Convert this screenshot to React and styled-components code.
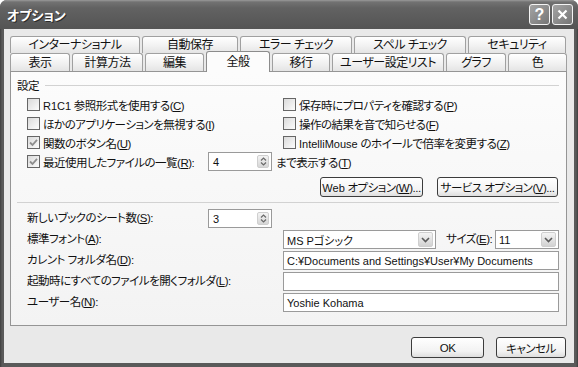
import React from 'react';
import styled, { createGlobalStyle } from 'styled-components';

const GlobalStyle = createGlobalStyle`
  html, body {
    margin: 0;
    padding: 0;
    background: #ffffff;
  }
  body {
    font-family: "Liberation Sans", "Noto Sans CJK JP", sans-serif;
    font-size: 12px;
  }
`;

const Window = styled.div`
  width: 578px;
  height: 367px;
  box-sizing: border-box;
  display: flex;
  flex-direction: column;
  background: linear-gradient(to right, #3e3e3e 0, #5a5a5a 2px, #5a5a5a calc(100% - 2px), #3e3e3e 100%);
  border-radius: 7px 7px 0 0;
  overflow: hidden;
  font-family: "Liberation Sans", "Noto Sans CJK JP", sans-serif;
  font-feature-settings: "palt";
  font-size: 11.5px;
  letter-spacing: -0.5px;
  color: #111;
`;

const TitleBar = styled.div`
  height: 29px;
  flex: none;
  display: flex;
  align-items: center;
  padding: 0 5px 0 7px;
  background: linear-gradient(to bottom, #9a9a9a 0, #727272 2px, #626262 8px, #5a5a5a 20px, #545454 100%);
`;

const Title = styled.div`
  flex: 1;
  color: #fff;
  font-weight: bold;
  font-size: 13px;
  letter-spacing: 0;
  text-shadow: 1px 1px 0 #2a2a2a;
`;

const CaptionButtons = styled.div`
  display: flex;
  gap: 2px;
`;

const CaptionButton = styled.div`
  width: 21px;
  height: 21px;
  box-sizing: border-box;
  border: 1px solid #f4f4f4;
  border-radius: 3px;
  background: linear-gradient(135deg, #a4a4a4, #767676);
  display: flex;
  align-items: center;
  justify-content: center;
  color: #fff;
  font-family: "Liberation Sans", sans-serif;
  font-weight: bold;
  font-size: 16px;
  letter-spacing: 0;
`;

const Client = styled.div`
  flex: 1;
  margin: 0 4px 4px;
  background: #e9e9e9;
  padding: 7px 7px 0 6px;
  display: flex;
  flex-direction: column;
`;

const TabRow = styled.div`
  display: flex;
  align-items: flex-end;
  gap: 2px;
  height: ${p => p.h}px;
`;

const Tab = styled.div`
  position: relative;
  z-index: ${p => (p.active ? 2 : 0)};
  width: ${p => p.w}px;
  height: ${p => (p.active ? '21px' : '100%')};
  margin-bottom: ${p => (p.active ? -1 : 0)}px;
  box-sizing: border-box;
  border: 1px solid ${p => (p.active ? '#8c8c8c' : '#a0a0a0')};
  border-bottom: none;
  border-radius: 3px 3px 0 0;
  background: ${p => (p.active ? '#fcfcfc' : 'linear-gradient(to bottom, #ffffff, #f0f0f0 60%, #e4e4e4)')};
  display: flex;
  align-items: center;
  justify-content: center;
  white-space: nowrap;
  line-height: 14px;
  font-size: 12px;
`;

const Panel = styled.div`
  height: 255px;
  box-sizing: border-box;
  border: 1px solid #959595;
  background: linear-gradient(to bottom, #fcfcfc, #f3f3f3);
  padding: 6px 6px 0 6px;
  display: flex;
  flex-direction: column;
`;

const GroupHeader = styled.div`
  height: 14px;
  display: flex;
  align-items: center;
  gap: 6px;
  padding-right: 1px;
`;

const Rule = styled.div`
  flex: 1;
  height: 1px;
  background: #d2d2d2;
`;

const CheckSection = styled.div`
  margin-top: 3px;
  padding-left: 10px;
  display: grid;
  grid-template-columns: 256px 1fr;
  grid-auto-rows: 19px;
`;

const CheckItem = styled.div`
  display: flex;
  align-items: center;
  gap: 3px;
  white-space: nowrap;
  grid-column: ${p => (p.span ? '1 / 3' : 'auto')};
`;

const Box = styled.span`
  width: 13px;
  height: 13px;
  box-sizing: border-box;
  flex: none;
  border: 1px solid #666;
  background: linear-gradient(135deg, #dadada, #fcfcfc);
  display: flex;
  align-items: center;
  justify-content: center;
`;

const Latin = styled.span`
  letter-spacing: 0;
  font-size: 11px;
`;

const InlineLabel = styled.span`
  width: ${p => p.w}px;
  flex: none;
`;

const TrailText = styled.span`
  margin-left: 1px;
`;

const SpinBox = styled.div`
  width: 64px;
  height: 19px;
  flex: none;
  box-sizing: border-box;
  border: 1px solid #9a9a9a;
  background: #fff;
  display: flex;
  align-items: center;
  padding: 0 2px 0 4px;
  letter-spacing: 0;
  font-size: 11px;
`;

const SpinValue = styled.span`
  flex: 1;
`;

const SpinButton = styled.div`
  width: 12px;
  height: 13px;
  box-sizing: border-box;
  border: 1px solid #cfcfcf;
  border-radius: 2px;
  background: linear-gradient(to bottom, #f4f4f4, #d6d6d6);
  display: flex;
  align-items: center;
  justify-content: center;
`;

const ButtonRow = styled.div`
  margin-top: 6px;
  height: 20px;
  display: flex;
  justify-content: flex-end;
  gap: 14px;
  padding-right: 2px;
`;

const PushButton = styled.div`
  width: ${p => p.w}px;
  height: ${p => p.h || 20}px;
  box-sizing: border-box;
  border: 1px solid #3c3c3c;
  border-radius: 3px;
  background: linear-gradient(to bottom, #ffffff, #f2f2f2 70%, #dedede);
  display: flex;
  align-items: center;
  justify-content: center;
  white-space: nowrap;
`;

const Divider = styled.div`
  margin-top: 5px;
  height: 1px;
  background: #d2d2d2;
  margin-right: 1px;
`;

const FieldGrid = styled.div`
  margin-top: 5px;
  padding-left: 10px;
  display: grid;
  grid-template-columns: 181px 75px 276px;
  grid-auto-rows: 21px;
  align-items: center;
`;

const FieldLabel = styled.div`
  white-space: nowrap;
  grid-column: ${p => (p.span ? '1 / 3' : 'auto')};
  margin-top: -3px;
`;

const FontRow = styled.div`
  display: flex;
  align-items: center;
  white-space: nowrap;
`;

const TextBox = styled.div`
  width: ${p => (p.w ? `${p.w}px` : '100%')};
  height: 19px;
  flex: none;
  box-sizing: border-box;
  border: 1px solid #9a9a9a;
  background: #fff;
  display: flex;
  align-items: center;
  padding: 0 2px 0 3px;
  white-space: nowrap;
  overflow: hidden;
  letter-spacing: 0;
  font-size: 11px;
`;

const ComboText = styled.span`
  flex: 1;
`;

const ComboButton = styled.div`
  width: 15px;
  height: 15px;
  box-sizing: border-box;
  border: 1px solid #cfcfcf;
  border-radius: 2px;
  background: linear-gradient(to bottom, #f4f4f4, #d2d2d2);
  display: flex;
  align-items: center;
  justify-content: center;
`;

const SizeLabel = styled.span`
  flex: 1;
  margin: -3px 0 0 10px;
`;

const Footer = styled.div`
  margin-top: 11px;
  display: flex;
  justify-content: flex-end;
  gap: 12px;
  padding-right: 1px;
`;

const Check = () => (
  <svg width="9" height="9" viewBox="0 0 9 9">
    <path d="M1 4.5 L3.5 7 L8 1.8" fill="none" stroke="#8e8e8e" strokeWidth="1.8" />
  </svg>
);

const CheckBox = ({ checked, children, span }) => (
  <CheckItem span={span}>
    <Box>{checked && <Check />}</Box>
    <span>{children}</span>
  </CheckItem>
);

const Spin = ({ value }) => (
  <SpinBox>
    <SpinValue>{value}</SpinValue>
    <SpinButton>
      <svg width="7" height="9" viewBox="0 0 7 9">
        <path d="M1 3.5 L3.5 1 L6 3.5 M1 5.5 L3.5 8 L6 5.5" fill="none" stroke="#6a6a6a" strokeWidth="1.2" />
      </svg>
    </SpinButton>
  </SpinBox>
);

const ComboArrow = () => (
  <ComboButton>
    <svg width="9" height="6" viewBox="0 0 9 6">
      <path d="M1 1 L4.5 4.5 L8 1" fill="none" stroke="#5a5a5a" strokeWidth="1.6" />
    </svg>
  </ComboButton>
);

const topTabs = [
  ['インターナショナル', 130],
  ['自動保存', 96],
  ['エラー チェック', 112],
  ['スペル チェック', 112],
  ['セキュリティ', 98],
];

const bottomTabs = [
  ['表示', 60],
  ['計算方法', 71],
  ['編集', 59],
  ['全般', 64, true],
  ['移行', 58],
  ['ユーザー設定リスト', 112],
  ['グラフ', 60],
  ['色', 59],
];

export default function App() {
  return (
    <>
      <GlobalStyle />
      <Window>
        <TitleBar>
          <Title>オプション</Title>
          <CaptionButtons>
            <CaptionButton>?</CaptionButton>
            <CaptionButton>
              <svg width="11" height="11" viewBox="0 0 11 11">
                <path d="M1.5 1.5 L9.5 9.5 M9.5 1.5 L1.5 9.5" stroke="#fff" strokeWidth="2.2" />
              </svg>
            </CaptionButton>
          </CaptionButtons>
        </TitleBar>
        <Client>
          <TabRow h={17}>
            {topTabs.map(([label, w]) => (
              <Tab key={label} w={w}>{label}</Tab>
            ))}
          </TabRow>
          <TabRow h={18}>
            {bottomTabs.map(([label, w, active]) => (
              <Tab key={label} w={w} active={active}>{label}</Tab>
            ))}
          </TabRow>
          <Panel>
            <GroupHeader>
              <span>設定</span>
              <Rule />
            </GroupHeader>
            <CheckSection>
              <CheckBox><Latin>R1C1</Latin> 参照形式を使用する(<u>C</u>)</CheckBox>
              <CheckBox>保存時にプロパティを確認する(<u>P</u>)</CheckBox>
              <CheckBox>ほかのアプリケーションを無視する(<u>I</u>)</CheckBox>
              <CheckBox>操作の結果を音で知らせる(<u>F</u>)</CheckBox>
              <CheckBox checked>関数のボタン名(<u>U</u>)</CheckBox>
              <CheckBox><Latin>IntelliMouse</Latin> のホイールで倍率を変更する(<u>Z</u>)</CheckBox>
              <CheckItem span>
                <Box><Check /></Box>
                <InlineLabel w={162}>最近使用したファイルの一覧(<u>R</u>):</InlineLabel>
                <Spin value="4" />
                <TrailText>まで表示する(<u>T</u>)</TrailText>
              </CheckItem>
            </CheckSection>
            <ButtonRow>
              <PushButton w={103}>
                <span><Latin>Web</Latin> オプション(<u>W</u>)...</span>
              </PushButton>
              <PushButton w={121}>
                <span>サービス オプション(<u>V</u>)...</span>
              </PushButton>
            </ButtonRow>
            <Divider />
            <FieldGrid>
              <FieldLabel>新しいブックのシート数(<u>S</u>):</FieldLabel>
              <Spin value="3" />
              <span />
              <FieldLabel span>標準フォント(<u>A</u>):</FieldLabel>
              <FontRow>
                <TextBox w={153}>
                  <ComboText>MS Pゴシック</ComboText>
                  <ComboArrow />
                </TextBox>
                <SizeLabel>サイズ(<u>E</u>):</SizeLabel>
                <TextBox w={64}>
                  <ComboText>11</ComboText>
                  <ComboArrow />
                </TextBox>
              </FontRow>
              <FieldLabel span>カレント フォルダ名(<u>D</u>):</FieldLabel>
              <TextBox>C:¥Documents and Settings¥User¥My Documents</TextBox>
              <FieldLabel span>起動時にすべてのファイルを開くフォルダ(<u>L</u>):</FieldLabel>
              <TextBox />
              <FieldLabel span>ユーザー名(<u>N</u>):</FieldLabel>
              <TextBox>Yoshie Kohama</TextBox>
            </FieldGrid>
          </Panel>
          <Footer>
            <PushButton w={73} h={21}>OK</PushButton>
            <PushButton w={70} h={21}>キャンセル</PushButton>
          </Footer>
        </Client>
      </Window>
    </>
  );
}
